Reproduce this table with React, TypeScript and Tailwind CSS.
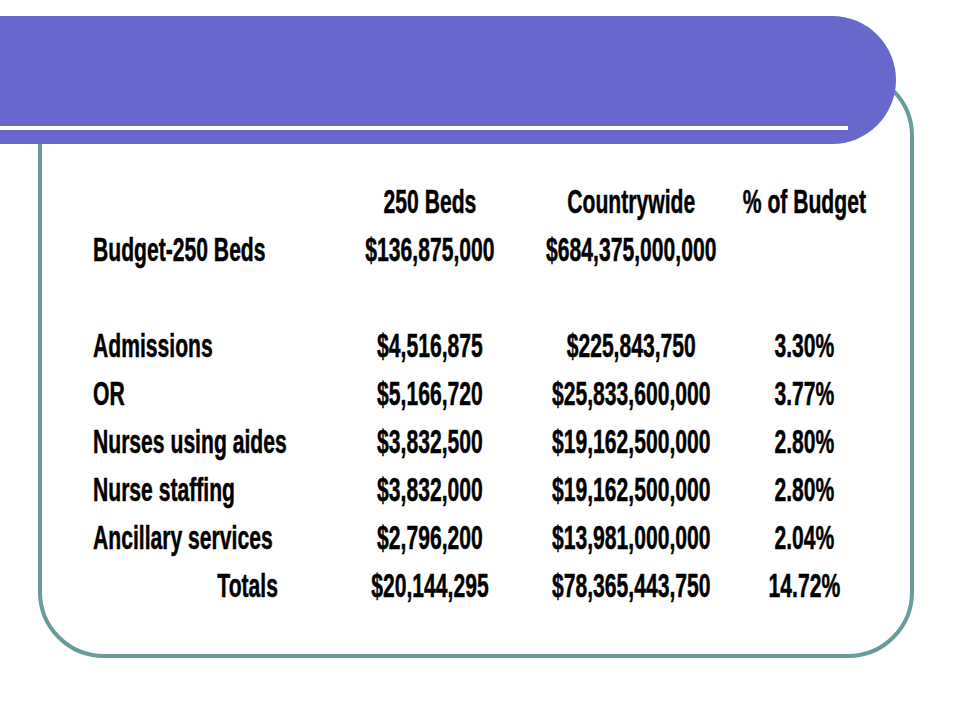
const rows: [string, string, string, string][] = [
  ["", "250 Beds", "Countrywide", "% of Budget"],
  ["Budget-250 Beds", "$136,875,000", "$684,375,000,000", ""],
  ["", "", "", ""],
  ["Admissions", "$4,516,875", "$225,843,750", "3.30%"],
  ["OR", "$5,166,720", "$25,833,600,000", "3.77%"],
  ["Nurses using aides", "$3,832,500", "$19,162,500,000", "2.80%"],
  ["Nurse staffing", "$3,832,000", "$19,162,500,000", "2.80%"],
  ["Ancillary services", "$2,796,200", "$13,981,000,000", "2.04%"],
  ["Totals", "$20,144,295", "$78,365,443,750", "14.72%"],
]

export default function App() {
  return (
    <div className="relative w-[960px] h-[720px] bg-white overflow-hidden">
      {/* frame */}
      <div className="ml-[38px] mt-[70px] w-[876px] h-[588px] border-4 border-[#699b9b] rounded-[66px]">
        <div className="pl-[51px] pt-[104px]">
          <div
            className="origin-left scale-x-[0.64] w-[1300px] grid grid-cols-[370px_313px_316px_225px] auto-rows-[48px] text-[33px] leading-[48px] font-bold text-black whitespace-nowrap [-webkit-text-stroke:0.5px_black]"
            style={{ fontFamily: '"Liberation Sans", Arial, sans-serif' }}
          >
            {rows.map((r, i) => (
              <div key={i} className="contents">
                <div className={r[0] === "Totals" ? "text-right pr-[81px]" : ""}>{r[0]}</div>
                <div className="text-center">{r[1]}</div>
                <div className="text-center">{r[2]}</div>
                <div className="text-center">{r[3]}</div>
              </div>
            ))}
          </div>
        </div>
      </div>

      {/* title banner */}
      <div className="absolute left-0 top-[16px] w-[896px] h-[128px] bg-[#6868cc] rounded-r-[64px]">
        <div className="mt-[110px] w-[848px] h-[4px] bg-white" />
      </div>
    </div>
  )
}
